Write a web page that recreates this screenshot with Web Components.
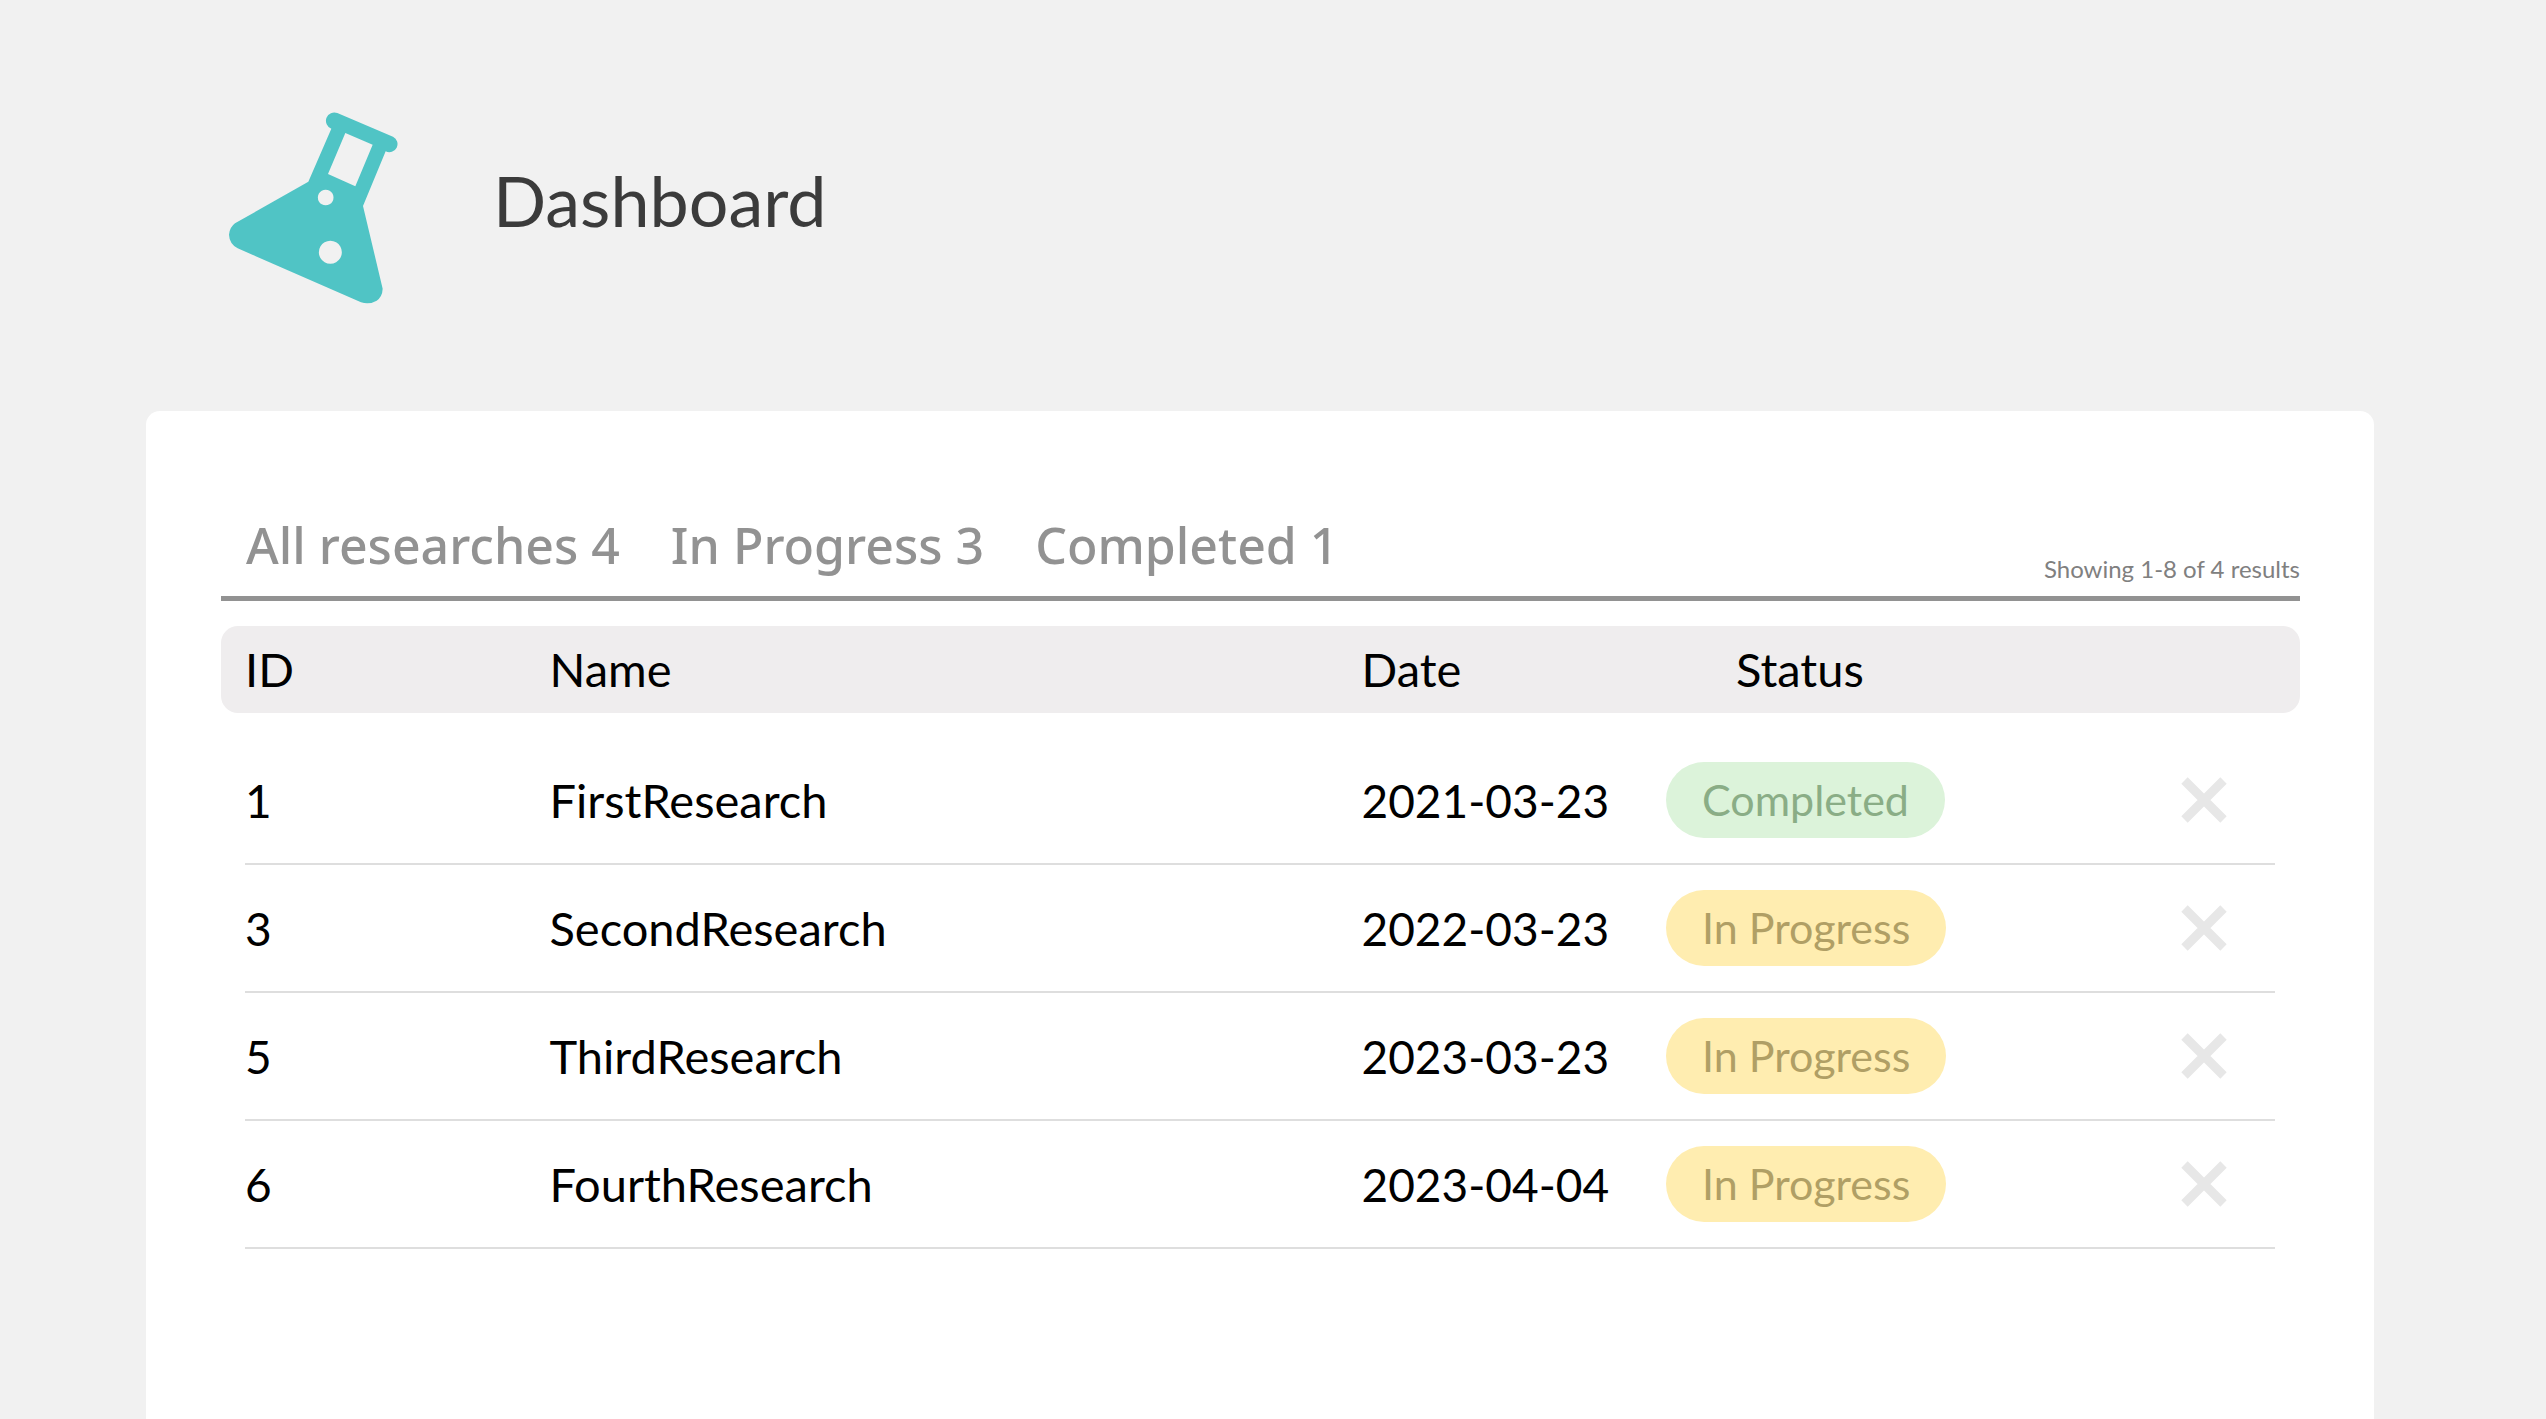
<!DOCTYPE html>
<html lang="en">
<head>
<meta charset="utf-8">
<meta name="viewport" content="width=device-width, initial-scale=1">
<title>Dashboard</title>
<style>
  html, body { margin: 0; min-height: 100%; background: #f1f1f1; }
  body { font-family: Lato, "Liberation Sans", sans-serif; color: #000; }
</style>
</head>
<body>
<research-app></research-app>

<script>
const define = (name, html, setup) => {
  const template = document.createElement('template');
  template.innerHTML = html;
  customElements.define(name, class extends HTMLElement {
    constructor() {
      super();
      this.attachShadow({ mode: 'open' }).append(template.content.cloneNode(true));
    }
    connectedCallback() { if (setup) setup(this, this.shadowRoot); }
  });
};

define('flask-logo', `
  <style>
    :host { display: block; flex: none; }
    svg { display: block; width: 190px; height: 220px; }
  </style>
  <svg viewBox="0 -30 570 660" role="img" aria-label="Flask">
    <path fill="#50c4c5" fill-rule="evenodd" d="M352 39 L519 110 A23 23 0 0 1 497 154 L429 318 L488 566 Q487 590 470 602 Q448 615 423 607 L53 445 Q28 431 27 404 Q29 382 45 370 L265 245 L334 86 A25 25 0 0 1 352 39 Z
      M376 99 L458 134 L406 259 L324 222 Z
      M317 269 a23.500 23.500 0 1 0 .1 0 Z
      M331 422 a34.500 34.500 0 1 0 .1 0 Z"/>
  </svg>`);

define('page-header', `
  <style>
    :host { display: flex; align-items: center; gap: 83px; padding: 90px 220px 101px; }
    h1 { margin: 0; font-size: 70px; line-height: 84px; font-weight: 400; color: #3b3b3b; }
  </style>
  <flask-logo></flask-logo>
  <h1><slot></slot></h1>`);

define('filter-tab', `
  <style>
    :host { display: block; }
    button { display: block; margin: 0; padding: 0; border: 0; background: none; cursor: pointer;
      font: 500 50px/68px "Noto Sans", "Liberation Sans", sans-serif; color: #929292; white-space: nowrap; }
  </style>
  <button type="button"><slot></slot></button>`);

define('filter-bar', `
  <style>
    :host { display: flex; justify-content: space-between; align-items: flex-end; border-bottom: 5px solid #929292; }
    nav { display: flex; gap: 51px; padding: 0 25px 17px; }
    p { margin: 0; padding-bottom: 13px; font-size: 24px; line-height: 29px; color: #808080; white-space: nowrap; }
  </style>
  <nav><slot></slot></nav>
  <p><slot name="summary"></slot></p>`);

define('status-pill', `
  <style>
    :host { display: inline-block; padding: 12px 36px; border-radius: 38px; font-size: 43px; line-height: 52px;
      background: #ffedb0; color: #b09f65; white-space: nowrap; }
    :host([kind="completed"]) { background: #dcf3da; color: #8aad86; }
  </style>
  <slot></slot>`);

define('delete-button', `
  <style>
    :host { display: block; }
    button { display: block; margin: 0; padding: 0; border: 0; background: none; cursor: pointer; }
    svg { display: block; width: 46px; height: 46px; }
  </style>
  <button type="button" aria-label="Delete research">
    <svg viewBox="0 0 46 46" fill="none" stroke="#e7e7e7" stroke-width="9" aria-hidden="true">
      <path d="M3.500 3.500L42.500 42.500M42.500 3.500L3.500 42.500"/>
    </svg>
  </button>`);

const researches = [
  [1, 'FirstResearch', '2021-03-23', 'Completed'],
  [3, 'SecondResearch', '2022-03-23', 'In Progress'],
  [5, 'ThirdResearch', '2023-03-23', 'In Progress'],
  [6, 'FourthResearch', '2023-04-04', 'In Progress']
];

define('research-table', `
  <style>
    :host { display: block; margin-top: 25px; }
    table, thead, tbody { display: block; }
    tr { display: grid; grid-template-columns: 15% 40% 15% 1fr auto; align-items: center; }
    th, td { padding: 0; text-align: left; font-weight: 400; font-size: 46px; line-height: 55px; }
    thead tr { padding: 16px 25px 16px 24px; border-radius: 17px; background: #efedee; }
    th, td:nth-child(2) { font-size: 47px; }
    th:nth-child(4) { padding-left: 70px; }
    tbody { padding: 24px 25px 0 24px; }
    tbody tr { padding: 25px 0; border-bottom: 2px solid #dedede; }
    td:nth-child(4) { display: flex; }
    td:last-child { padding-right: 48px; }
  </style>
  <table>
    <thead><tr><th>ID</th><th>Name</th><th>Date</th><th>Status</th><th></th></tr></thead>
    <tbody></tbody>
  </table>`, (host, root) => {
  root.querySelector('tbody').innerHTML = researches.map(([id, name, date, status]) =>
    `<tr><td>${id}</td><td>${name}</td><td>${date}</td>` +
    `<td><status-pill kind="${status === 'Completed' ? 'completed' : 'progress'}">${status}</status-pill></td>` +
    `<td><delete-button></delete-button></td></tr>`).join('');
});

define('research-card', `
  <style>
    :host { display: block; flex: 1; margin: 0 172px 0 146px; padding: 100px 74px 75px 75px;
      background: #fff; border-radius: 14px 14px 0 0; }
  </style>
  <slot></slot>`);

define('research-app', `
  <style>
    :host { display: flex; flex-direction: column; min-height: 100vh; }
  </style>
  <page-header>Dashboard</page-header>
  <research-card>
    <filter-bar>
      <filter-tab>All researches 4</filter-tab>
      <filter-tab>In Progress 3</filter-tab>
      <filter-tab>Completed 1</filter-tab>
      <span slot="summary">Showing 1-8 of 4 results</span>
    </filter-bar>
    <research-table></research-table>
  </research-card>`);
</script>
</body>
</html>
